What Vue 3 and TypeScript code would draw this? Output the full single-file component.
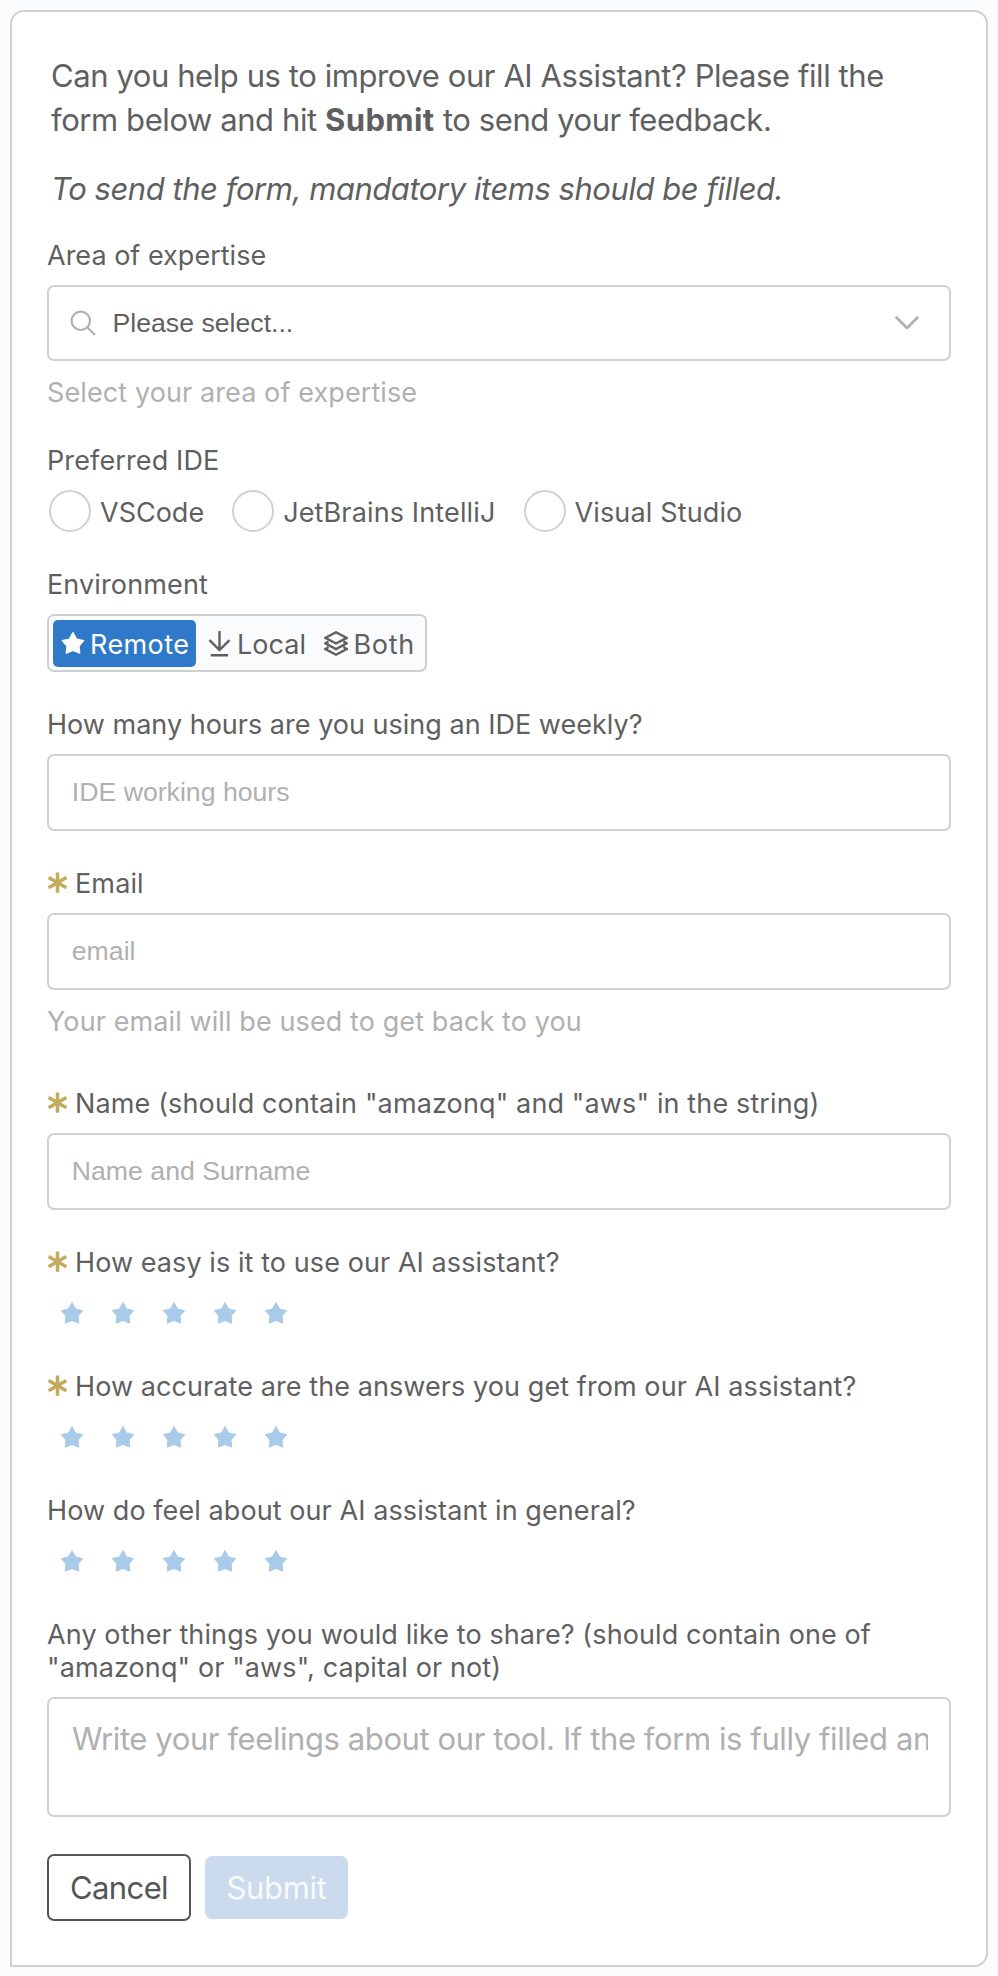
<script setup lang="ts">
import { ref } from 'vue'

interface Rating {
  label: string
  required: boolean
}

const ides: string[] = ['VSCode', 'JetBrains IntelliJ', 'Visual Studio']
const environments: string[] = ['Remote', 'Local', 'Both']
const environment = ref('Remote')

const ratings: Rating[] = [
  { label: 'How easy is it to use our AI assistant?', required: true },
  { label: 'How accurate are the answers you get from our AI assistant?', required: true },
  { label: 'How do feel about our AI assistant in general?', required: false },
]

const starPath =
  'M12 1.6 L15.6 8 L22.7 9.6 L18 15 L18.8 22.2 L12 19.4 L5.2 22.2 L6 15 L1.3 9.6 L8.4 8 Z'
const asteriskPath = 'M10.5 0.4V20.8M1.6 5.5L19.4 15.7M19.4 5.5L1.6 15.7'
</script>

<template>
  <form class="card" @submit.prevent>
    <div class="intro">
      <p>
        Can you help us to improve our AI Assistant? Please fill the<br />
        form below and hit <strong>Submit</strong> to send your feedback.
      </p>
      <p class="note"><em>To send the form, mandatory items should be filled.</em></p>
    </div>

    <section class="field first">
      <label class="label tight">Area of expertise</label>
      <div class="select box">
        <svg class="search" viewBox="0 0 26 26" width="26" height="26">
          <circle cx="10.8" cy="10.8" r="9.2" />
          <path d="M17.3 17.3L25 25" />
        </svg>
        <span class="select-value">Please select...</span>
        <svg class="chevron" viewBox="0 0 26 16" width="26" height="16">
          <path d="M2.5 2.5L13 13L23.5 2.5" />
        </svg>
      </div>
      <p class="help">Select your area of expertise</p>
    </section>

    <section class="field after-help">
      <label class="label">Preferred IDE</label>
      <div class="radios">
        <label v-for="ide in ides" :key="ide" class="radio">
          <span class="circle"></span>
          <span class="radio-text">{{ ide }}</span>
        </label>
      </div>
    </section>

    <section class="field">
      <label class="label">Environment</label>
      <div class="toggle">
        <button
          v-for="name in environments"
          :key="name"
          type="button"
          class="option"
          :class="[name.toLowerCase(), { active: environment === name }]"
          @click="environment = name"
        >
          <svg v-if="name === 'Remote'" viewBox="0 0 24 26" width="24" height="26">
            <path class="solid" :d="starPath" />
          </svg>
          <svg v-else-if="name === 'Local'" viewBox="0 0 24 26" width="24" height="26">
            <path d="M11.5 0V19M1.5 9.2L11.5 19L21.5 9.2M2.7 24.2H20.1" />
          </svg>
          <svg v-else viewBox="0 0 24 26" width="24" height="26">
            <path
              d="M12 1.3L22.8 6.9L12 12.5L1.3 6.9ZM4.5 10.4L1.3 12.4L12 18.1L22.8 12.4L19.4 10.4M4.5 16L1.3 18L12 23.7L22.8 18L19.4 16"
            />
          </svg>
          <span class="option-text">{{ name }}</span>
        </button>
      </div>
    </section>

    <section class="field">
      <label class="label tight">How many hours are you using an IDE weekly?</label>
      <input class="input box" type="text" placeholder="IDE working hours" />
    </section>

    <section class="field">
      <label class="label">
        <svg class="asterisk" viewBox="0 0 21 21" width="21" height="21"><path :d="asteriskPath" /></svg>
        Email
      </label>
      <input class="input box" type="text" placeholder="email" />
      <p class="help">Your email will be used to get back to you</p>
    </section>

    <section class="field spaced">
      <label class="label">
        <svg class="asterisk" viewBox="0 0 21 21" width="21" height="21"><path :d="asteriskPath" /></svg>
        Name (should contain "amazonq" and "aws" in the string)
      </label>
      <input class="input box" type="text" placeholder="Name and Surname" />
    </section>

    <section v-for="rating in ratings" :key="rating.label" class="field">
      <label class="label rating-label">
        <svg v-if="rating.required" class="asterisk" viewBox="0 0 21 21" width="21" height="21">
          <path :d="asteriskPath" />
        </svg>
        {{ rating.label }}
      </label>
      <div class="stars">
        <svg v-for="n in 5" :key="n" viewBox="0 0 24 24" width="24" height="24">
          <path :d="starPath" />
        </svg>
      </div>
    </section>

    <section class="field">
      <label class="label block">
        Any other things you would like to share? (should contain one of<br />
        "amazonq" or "aws", capital or not)
      </label>
      <div class="area box">
        <textarea
          wrap="off"
          placeholder="Write your feelings about our tool. If the form is fully filled and"
        ></textarea>
      </div>
    </section>

    <div class="actions">
      <button type="button" class="cancel">Cancel</button>
      <button type="submit" class="submit" disabled>Submit</button>
    </div>
  </form>
</template>

<style>
body {
  margin: 0;
  background: #fafbfd;
}
</style>

<style scoped>
.card {
  box-sizing: border-box;
  width: 978px;
  height: 1957px;
  margin: 10px 0 0 10px;
  padding: 42px 35px 0;
  border: 2px solid #d1d1d1;
  border-radius: 14px 14px 14px 0;
  background: #fff;
  color: #5f5f5f;
  font-family: Inter, "Liberation Sans", sans-serif;
}

p {
  margin: 0;
}

.intro {
  padding-left: 4px;
  font-size: 31px;
  line-height: 44px;
  letter-spacing: -0.42px;
  white-space: nowrap;
}

.intro strong {
  font-weight: 700;
  letter-spacing: 0.4px;
}

.note {
  margin-top: 25px;
  padding-left: 0;
  letter-spacing: -0.46px;
}

.field {
  margin-top: 36px;
}

.field.first {
  margin-top: 28px;
}

.field.after-help {
  margin-top: 35px;
}

.field.spaced {
  margin-top: 49px;
}

.label {
  display: flex;
  align-items: flex-start;
  gap: 7px;
  margin-bottom: 13px;
  font-size: 27px;
  line-height: 33px;
  letter-spacing: 0.13px;
  white-space: nowrap;
}

.label.tight {
  letter-spacing: 0.01px;
}

.label.rating-label {
  letter-spacing: 0.08px;
}

.label.block {
  display: block;
  letter-spacing: 0.1px;
}

.asterisk {
  flex: none;
  margin-top: 5px;
  fill: none;
  stroke: #c3aa5c;
  stroke-width: 3.5;
}

.box {
  box-sizing: border-box;
  width: 904px;
  border: 2px solid #d1d1d1;
  border-radius: 7px;
  background: #fff;
}

.select {
  display: flex;
  align-items: center;
  height: 76px;
  padding: 0 29px 0 21px;
}

.search {
  fill: none;
  stroke: #b0b0b0;
  stroke-width: 2.2;
}

.select-value {
  flex: 1;
  padding-left: 16.5px;
  font: 26.67px/30px "Liberation Sans", Arial, sans-serif;
  letter-spacing: 0;
}

.chevron {
  fill: none;
  stroke: #b0b0b0;
  stroke-width: 2.8;
  stroke-linecap: round;
  stroke-linejoin: round;
}

.help {
  margin-top: 15px;
  color: #b0b0b0;
  font-size: 27px;
  line-height: 33px;
  letter-spacing: 0.1px;
}

.radios {
  display: flex;
  gap: 28px;
  padding-left: 2px;
}

.radio {
  display: flex;
  align-items: center;
  gap: 9px;
  font-size: 27px;
  line-height: 33px;
  letter-spacing: 0.14px;
  white-space: nowrap;
}

.radio:first-child {
  letter-spacing: 0;
}

.circle {
  box-sizing: border-box;
  width: 42px;
  height: 42px;
  border: 2px solid #d1d1d1;
  border-radius: 50%;
}

.radio-text {
  padding-top: 3px;
}

.toggle {
  display: flex;
  box-sizing: border-box;
  gap: 4px;
  width: 380px;
  height: 58px;
  padding: 4px;
  border: 2px solid #cdcfd1;
  border-radius: 7px;
  background: #fafbfd;
}

.option {
  display: flex;
  align-items: center;
  box-sizing: border-box;
  gap: 5.5px;
  height: 47px;
  padding: 0 0 0 7.5px;
  border: 0;
  border-radius: 5px;
  background: transparent;
  color: #5f5f5f;
  font: 27px/33px Inter, "Liberation Sans", sans-serif;
  letter-spacing: 0.4px;
}

.option svg {
  flex: none;
  fill: none;
  stroke: currentColor;
  stroke-width: 2.4;
}

.option .solid {
  fill: currentColor;
  stroke-width: 1.2;
  stroke-linejoin: round;
}

.option-text {
  padding-top: 2px;
}

.remote {
  width: 143px;
}

.local {
  width: 112px;
  letter-spacing: 0.05px;
}

.both {
  gap: 6px;
  width: 105px;
  letter-spacing: 0.7px;
}

.active {
  background: #3079c8;
  color: #fff;
}

.input {
  display: block;
  height: 77px;
  padding: 0 22.8px;
  outline: none;
  color: #5f5f5f;
  font: 26.67px "Liberation Sans", Arial, sans-serif;
  letter-spacing: 0;
}

.input::placeholder,
textarea::placeholder {
  color: #b0b0b0;
  opacity: 1;
}

.stars {
  display: flex;
  align-items: center;
  box-sizing: border-box;
  height: 42px;
  padding: 0 0 1px 13px;
  gap: 27px;
}

.stars path {
  fill: #aacaea;
  stroke: #aacaea;
  stroke-width: 1;
  stroke-linejoin: round;
}

.area {
  height: 120px;
  padding: 18px 21px 0 23px;
}

textarea {
  display: block;
  box-sizing: border-box;
  width: 100%;
  height: 88px;
  padding: 0;
  border: 0;
  outline: none;
  resize: none;
  overflow: hidden;
  background: transparent;
  color: #5f5f5f;
  font: 31px/44px Inter, "Liberation Sans", sans-serif;
  letter-spacing: -0.41px;
  white-space: pre;
}

.actions {
  display: flex;
  align-items: center;
  gap: 14px;
  margin-top: 37px;
}

.actions button {
  box-sizing: border-box;
  padding: 0;
  border: 0;
  border-radius: 7px;
  font: 31px/44px Inter, "Liberation Sans", sans-serif;
}

.actions .cancel {
  width: 144px;
  height: 67px;
  border: 2px solid #555;
  background: #fff;
  color: #555;
  letter-spacing: -0.6px;
}

.actions .submit {
  width: 143px;
  height: 63px;
  background: #cbdbed;
  color: #f8fafc;
  letter-spacing: -0.3px;
}
</style>
